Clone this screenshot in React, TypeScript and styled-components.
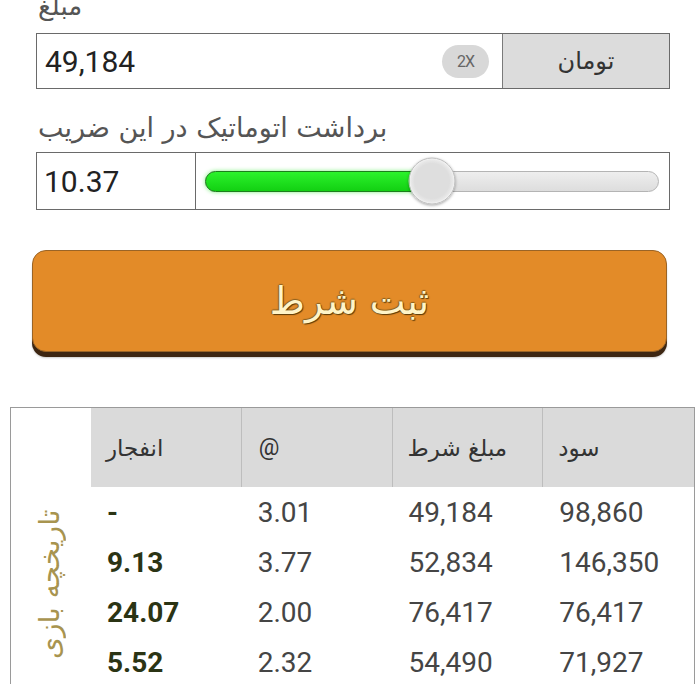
import React from "react";
import styled, { createGlobalStyle } from "styled-components";

const GlobalStyle = createGlobalStyle`
  html, body {
    margin: 0;
    padding: 0;
    background: #ffffff;
    overflow: hidden;
  }
`;

const fa = `"DejaVu Sans", "Noto Sans", sans-serif`;
const num = `Roboto, "Liberation Sans", sans-serif`;

interface BetRow {
  crash: string;
  at: string;
  amount: string;
  profit: string;
}

const rows: BetRow[] = [
  { crash: "-", at: "3.01", amount: "49,184", profit: "98,860" },
  { crash: "9.13", at: "3.77", amount: "52,834", profit: "146,350" },
  { crash: "24.07", at: "2.00", amount: "76,417", profit: "76,417" },
  { crash: "5.52", at: "2.32", amount: "54,490", profit: "71,927" },
  { crash: "1.21", at: "1.80", amount: "50,000", profit: "-" },
];

export default function App() {
  const cashout = 10.37;
  const sliderPercent = 50;

  return (
    <>
      <GlobalStyle />
      <Page>
        <Form>
          <FieldLabel>مبلغ</FieldLabel>
          <InputBox>
            <AmountValue>49,184</AmountValue>
            <DoubleChip>2X</DoubleChip>
            <CurrencyCell>تومان</CurrencyCell>
          </InputBox>

          <FieldLabel $second>برداشت اتوماتیک در این ضریب</FieldLabel>
          <SliderBox>
            <CashoutValue>{cashout.toFixed(2)}</CashoutValue>
            <SliderCell>
              <Track>
                <Fill style={{ width: `${sliderPercent - 3}%` }} />
                <Thumb style={{ left: `${sliderPercent}%` }} />
              </Track>
            </SliderCell>
          </SliderBox>

          <SubmitButton>ثبت شرط</SubmitButton>
        </Form>

        <HistoryTable>
          <CornerCell />
          <HeadCell>انفجار</HeadCell>
          <HeadCell $latin>@</HeadCell>
          <HeadCell>مبلغ شرط</HeadCell>
          <HeadCell $last>سود</HeadCell>
          <SideCell>
            <SideLabel>تاریخچه بازی</SideLabel>
          </SideCell>
          {rows.map((r, i) => (
            <React.Fragment key={i}>
              <Cell $bold>{r.crash}</Cell>
              <Cell>{r.at}</Cell>
              <Cell>{r.amount}</Cell>
              <Cell>{r.profit}</Cell>
            </React.Fragment>
          ))}
        </HistoryTable>
      </Page>
    </>
  );
}

const Page = styled.div`
  width: 700px;
  height: 695px;
  overflow: hidden;
  display: flex;
  flex-direction: column;
  margin-top: -11px;
`;

const Form = styled.div`
  display: flex;
  flex-direction: column;
  padding: 0 30px 0 36px;
`;

const FieldLabel = styled.div<{ $second?: boolean }>`
  font-family: ${fa};
  font-size: ${(p) => (p.$second ? "27px" : "26px")};
  color: #555;
  line-height: 34px;
  padding-left: 2px;
  margin-top: ${(p) => (p.$second ? "22px" : "0")};
  margin-bottom: ${(p) => (p.$second ? "7px" : "10px")};
`;

const InputBox = styled.div`
  display: flex;
  align-items: center;
  height: 56px;
  border: 1px solid #6a6a6a;
  box-sizing: border-box;
  background: #fff;
`;

const AmountValue = styled.div`
  flex: 1;
  font-family: ${num};
  font-size: 30px;
  color: #222;
  padding-left: 8px;
`;

const DoubleChip = styled.div`
  width: 47px;
  height: 33px;
  border-radius: 17px;
  background: #d8d8d8;
  color: #666;
  font-family: ${num};
  font-size: 16px;
  letter-spacing: -1px;
  display: flex;
  align-items: center;
  justify-content: center;
  margin-right: 13px;
`;

const CurrencyCell = styled.div`
  width: 166px;
  height: 100%;
  background: #dcdcdc;
  border-left: 1px solid #7a7a7a;
  display: flex;
  align-items: center;
  justify-content: center;
  font-family: ${fa};
  font-size: 24px;
  color: #333;
`;

const SliderBox = styled.div`
  display: flex;
  height: 58px;
  border: 1px solid #6a6a6a;
  box-sizing: border-box;
`;

const CashoutValue = styled.div`
  width: 159px;
  border-right: 1px solid #6a6a6a;
  display: flex;
  align-items: center;
  padding-left: 7px;
  box-sizing: border-box;
  font-family: ${num};
  font-size: 30px;
  color: #222;
`;

const SliderCell = styled.div`
  flex: 1;
  display: flex;
  align-items: center;
  padding: 0 10px 0 9px;
`;

const Track = styled.div`
  position: relative;
  flex: 1;
  height: 21px;
  border-radius: 11px;
  border: 1px solid #b4b4b4;
  box-sizing: border-box;
  background: linear-gradient(#eeeeee, #dddddd);
`;

const Fill = styled.div`
  height: 100%;
  margin: -1px 0 0 -1px;
  border: 1px solid #1c7e1c;
  border-radius: 11px 0 0 11px;
  background: linear-gradient(#2cf22c, #12d012);
  box-shadow: 0 0 4px rgba(40, 230, 40, 0.6);
`;

const Thumb = styled.div`
  position: absolute;
  top: 50%;
  width: 45px;
  height: 45px;
  border-radius: 50%;
  transform: translate(-50%, -50%);
  background: radial-gradient(circle, #dedede 55%, #e9e9e9 66%, #fbfbfb 74%);
  border: 1px solid #bcbcbc;
  box-shadow: 0 1px 3px rgba(0, 0, 0, 0.35);
`;

const SubmitButton = styled.button`
  margin: 40px 3px 0 -4px;
  height: 102px;
  border-radius: 14px;
  border: 1px solid #9a6426;
  background: #e38b28;
  box-shadow: 0 5px 0 #3d2612, 0 6px 2px rgba(0, 0, 0, 0.2);
  font-family: ${fa};
  font-size: 38px;
  font-weight: normal;
  color: #fff4c8;
  text-shadow: 1px 1px 1px #5a3a08, -1px 0 1px #8a6020, 0 -1px 1px #8a6020;
  cursor: pointer;
`;

const HistoryTable = styled.div`
  margin: 55px 5px 0 10px;
  border: 1px solid #9a9a9a;
  border-bottom: none;
  display: grid;
  grid-template-columns: 80px repeat(4, 1fr);
  grid-template-rows: 79px repeat(5, 50px);
`;

const CornerCell = styled.div`
  background: #fff;
`;

const HeadCell = styled.div<{ $latin?: boolean; $last?: boolean }>`
  background: #dadada;
  border-right: ${(p) => (p.$last ? "3px solid #dadada" : "1px solid #bdbdbd")};
  display: flex;
  align-items: center;
  padding-left: ${(p) => (p.$latin ? "17px" : "15px")};
  font-family: ${(p) => (p.$latin ? num : fa)};
  font-size: 23px;
  color: #333;
`;

const SideCell = styled.div`
  grid-row: 2 / span 5;
  display: flex;
  justify-content: center;
  padding-top: 2px;
  padding-right: 4px;
`;

const SideLabel = styled.span`
  writing-mode: vertical-rl;
  transform: rotate(180deg);
  font-family: ${fa};
  font-size: 28px;
  letter-spacing: 6px;
  color: #a8944f;
  height: 190px;
  text-align: center;
`;

const Cell = styled.div<{ $bold?: boolean }>`
  display: flex;
  align-items: center;
  padding-left: 16px;
  font-family: ${num};
  font-size: 28px;
  font-weight: ${(p) => (p.$bold ? 700 : 400)};
  color: ${(p) => (p.$bold ? "#2b3414" : "#454545")};
`;
